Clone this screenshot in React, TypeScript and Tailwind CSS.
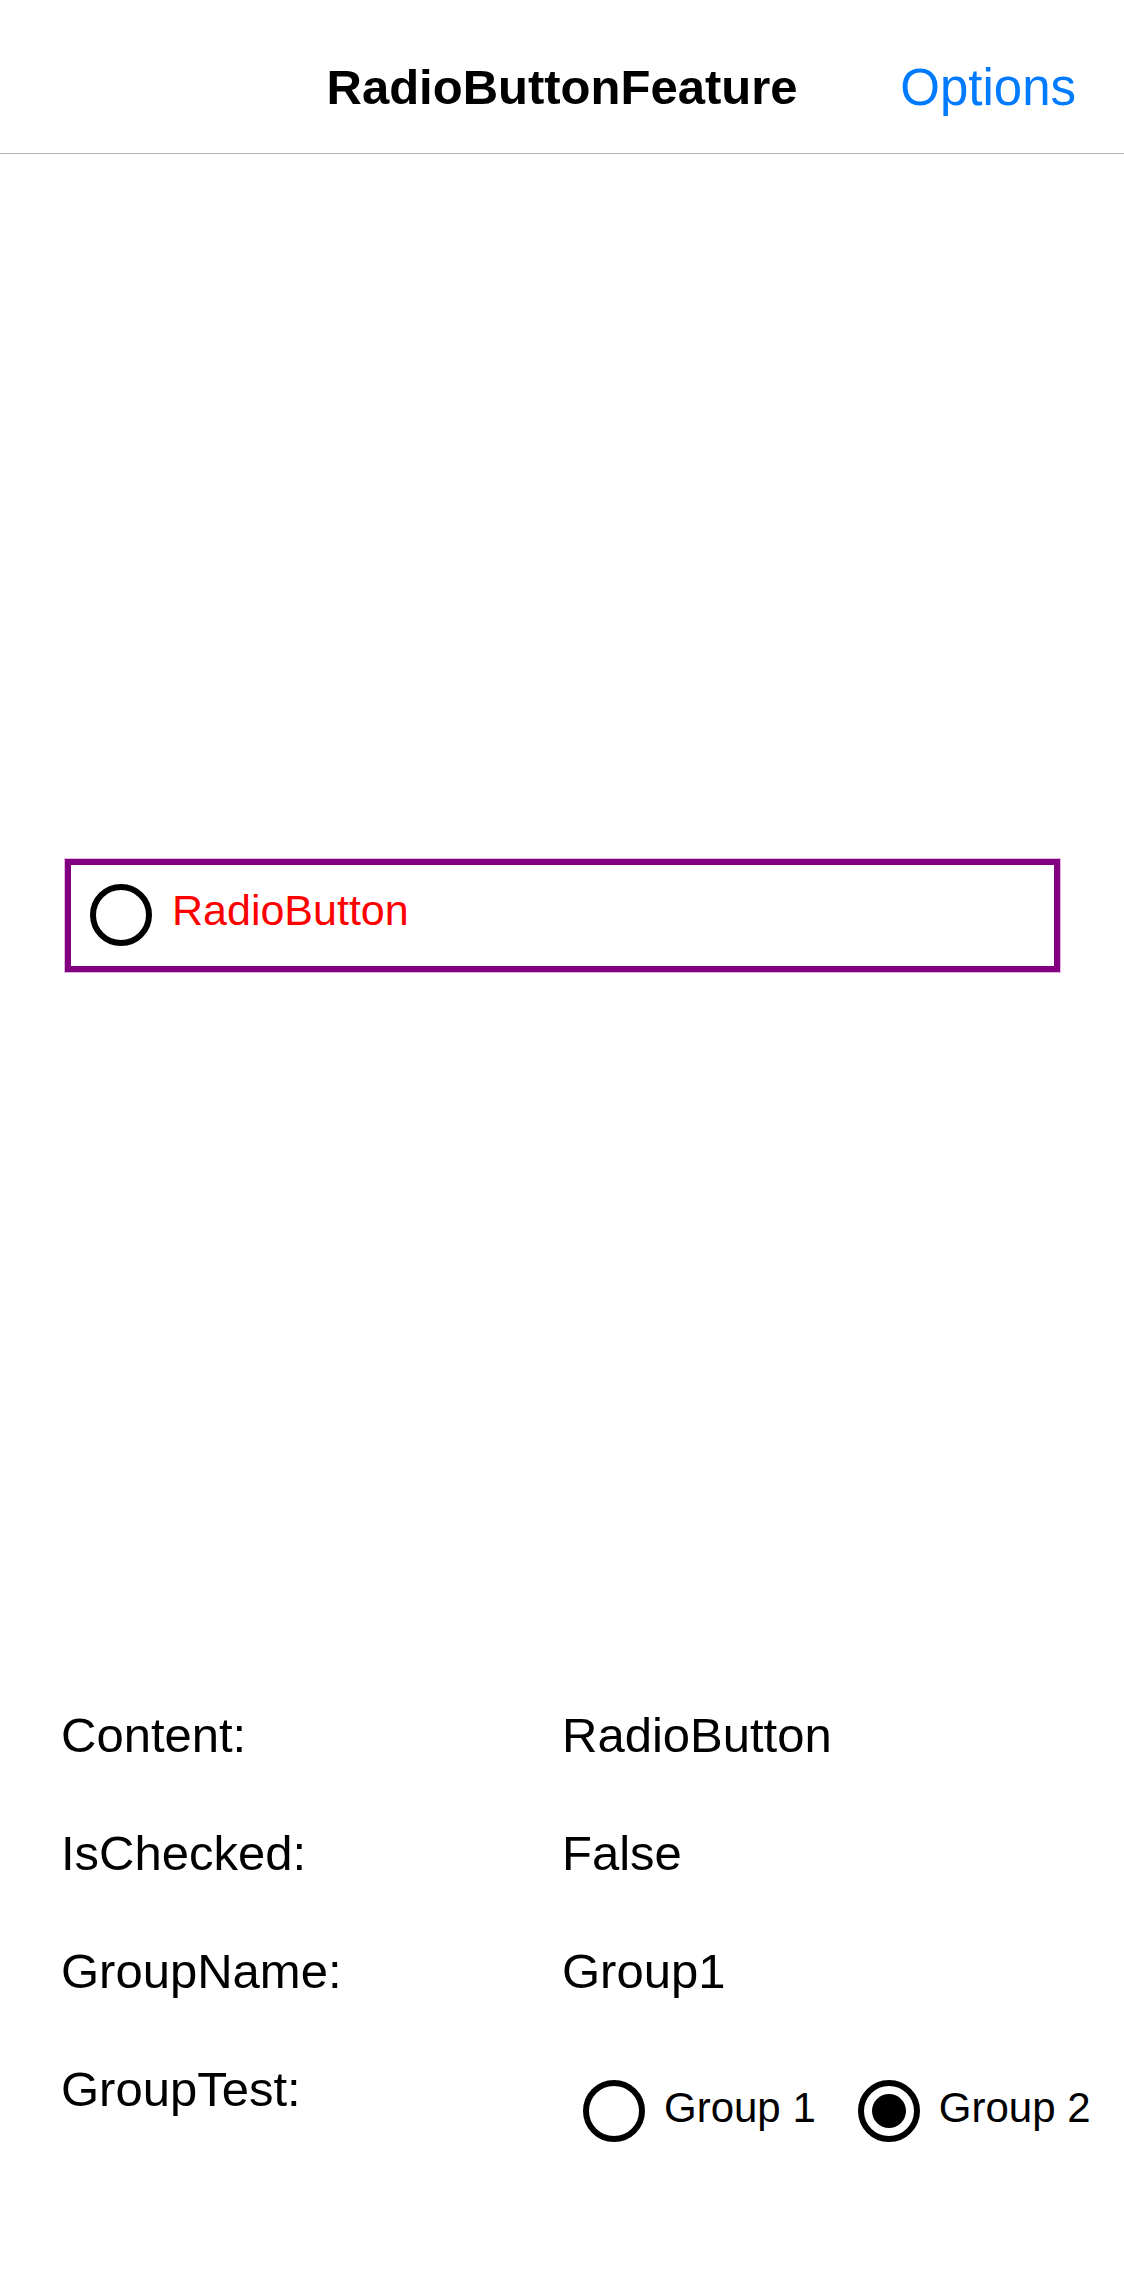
import React from 'react';

const Radio = ({ checked }: { checked?: boolean }) => (
  <div className="w-[62px] h-[62px] rounded-full border-[6px] border-black flex items-center justify-center shrink-0">
    {checked && <div className="w-[34px] h-[34px] rounded-full bg-black" />}
  </div>
);

const App = () => {
  const rows = [
    { label: 'Content:', value: 'RadioButton' },
    { label: 'IsChecked:', value: 'False' },
    { label: 'GroupName:', value: 'Group1' },
  ];

  return (
    <div className="h-[2286px] flex flex-col bg-white text-black font-['Liberation_Sans',Arial,sans-serif]">
      <header className="h-[154px] shrink-0 border-b border-[#b2b2b2] relative flex items-center justify-center pt-[21px]">
        <h1 className="text-[49px] leading-none font-bold">RadioButtonFeature</h1>
        <button className="absolute right-[48px] top-[21px] bottom-0 flex items-center text-[51px] leading-none text-[#007aff]">
          Options
        </button>
      </header>

      <main className="flex-1 flex items-center">
        <div className="ml-[65px] w-[995px] h-[113px] border-[6px] border-[#800080] shadow-[0_0_0_1px_#e2b8e2] flex items-center pl-[19px] gap-[20px]">
          <Radio />
          <span className="text-[43px] leading-none text-[#ff0000] mb-[10px] whitespace-nowrap">RadioButton</span>
        </div>
      </main>

      <section className="shrink-0 px-[61px] pb-[138px]">
        {rows.map((r) => (
          <div key={r.label} className="h-[118px] grid grid-cols-2 items-center text-[49px] leading-none">
            <span>{r.label}</span>
            <span>{r.value}</span>
          </div>
        ))}
        <div className="h-[118px] grid grid-cols-2 items-center text-[49px] leading-none">
          <span>GroupTest:</span>
          <div className="flex items-center gap-[42px] pl-[21px] mt-[44px] whitespace-nowrap">
            <div className="flex items-center gap-[19px] shrink-0">
              <Radio />
              <span className="text-[42px] leading-none mb-[6px]">Group 1</span>
            </div>
            <div className="flex items-center gap-[19px] shrink-0">
              <Radio checked />
              <span className="text-[42px] leading-none mb-[6px]">Group 2</span>
            </div>
          </div>
        </div>
      </section>
    </div>
  );
};

export default App;
